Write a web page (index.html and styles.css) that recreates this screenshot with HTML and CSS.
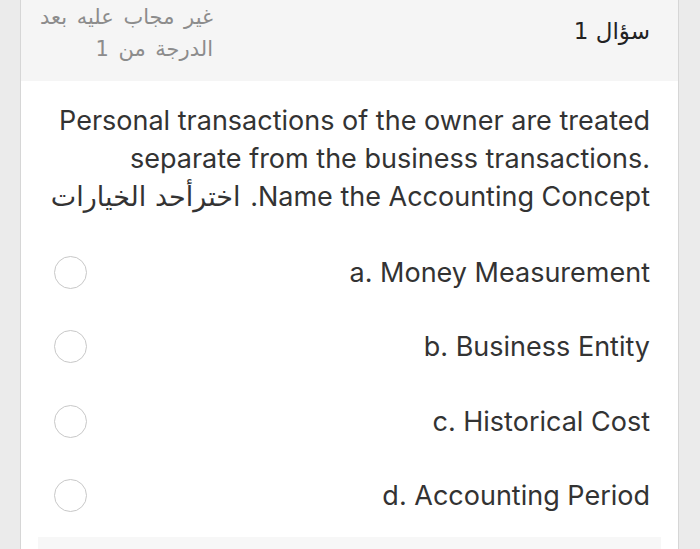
FILE: index.html
```html
<!DOCTYPE html>
<html lang="ar" dir="rtl">
<head>
<meta charset="utf-8">
<link rel="stylesheet" href="styles.css">
</head>
<body>
<div class="card">
  <div class="head">
    <div class="qno">سؤال 1</div>
    <div class="status">
      <div>غير مجاب عليه بعد</div>
      <div>الدرجة من 1</div>
    </div>
  </div>
  <div class="body">
    <p class="qtext"><span dir="ltr">Personal transactions of the owner are treated</span><br><span dir="ltr">separate from the business transactions.</span><br>Name the Accounting Concept. <span class="ar">اخترأحد الخيارات</span></p>
    <div class="options">
      <div class="opt"><span class="label" dir="ltr">a. Money Measurement</span><span class="radio"></span></div>
      <div class="opt"><span class="label" dir="ltr">b. Business Entity</span><span class="radio"></span></div>
      <div class="opt"><span class="label" dir="ltr">c. Historical Cost</span><span class="radio"></span></div>
      <div class="opt"><span class="label" dir="ltr">d. Accounting Period</span><span class="radio"></span></div>
    </div>
    <div class="footbar"></div>
  </div>
</div>
</body>
</html>
```
FILE: styles.css
```css
html, body {
  margin: 0;
  padding: 0;
  background: #ebebeb;
  height: 549px;
  overflow: hidden;
}
body {
  font-family: Inter, "Liberation Sans", "DejaVu Sans", sans-serif;
  color: #333;
  padding: 0 21px 0 20px;
}
.card {
  background: #fff;
  border-left: 1px solid #d6d6d6;
  border-right: 1px solid #d6d6d6;
  height: 549px;
}
.head {
  background: #f5f5f5;
  height: 81px;
  display: flex;
  justify-content: space-between;
  align-items: flex-start;
  padding: 0 28px 0 0;
  white-space: nowrap;
}
.qno {
  font-size: 23px;
  margin-top: 18px;
  color: #222;
  font-family: "DejaVu Sans", sans-serif;
}
.status {
  color: #8c8c8c;
  font-size: 21px;
  word-spacing: 3px;
  line-height: 32px;
  font-family: "DejaVu Sans", sans-serif;
  margin-top: 1px;
  text-align: right;
  width: 192px;
}
.body {
  padding: 0 28px 0 17px;
}
.qtext {
  margin: 0;
  padding-top: 21px;
  font-size: 27px;
  line-height: 38px;
  text-align: right;
  color: #333;
}
.ar {
  font-family: "DejaVu Sans", sans-serif;
  font-size: 27px;
  margin-right: 2px;
}
.options {
  display: flex;
  flex-direction: column;
  margin-top: 19px;
}
.opt {
  display: flex;
  justify-content: space-between;
  align-items: center;
  height: 74.5px;
  padding-left: 16px;
}
.label {
  font-size: 27px;
  color: #333;
}
.radio {
  width: 31px;
  height: 31px;
  border: 1.5px solid #c8c8c8;
  border-radius: 50%;
}
.footbar {
  margin-top: 4px;
  margin-right: -11px;
  height: 20px;
  background: #f7f7f7;
}
```
